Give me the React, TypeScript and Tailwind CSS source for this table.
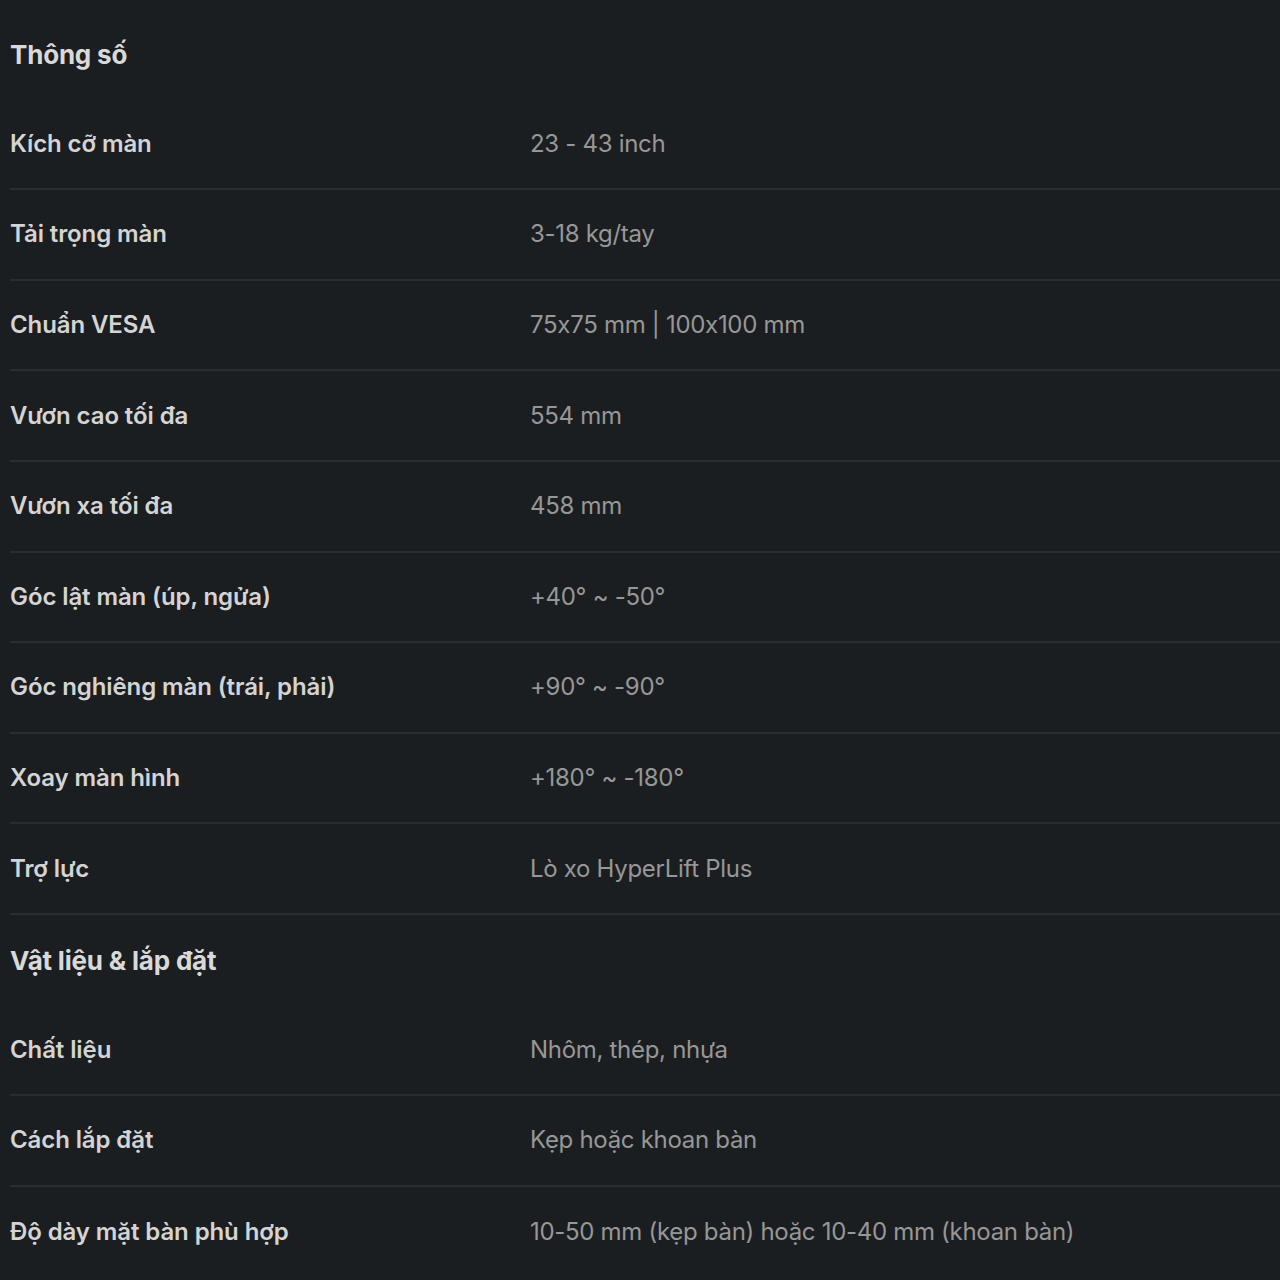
type Row = { label: string; value?: string; heading?: boolean }

const rows: Row[] = [
  { label: "Thông số", heading: true },
  { label: "Kích cỡ màn", value: "23 - 43 inch" },
  { label: "Tải trọng màn", value: "3-18 kg/tay" },
  { label: "Chuẩn VESA", value: "75x75 mm | 100x100 mm" },
  { label: "Vươn cao tối đa", value: "554 mm" },
  { label: "Vươn xa tối đa", value: "458 mm" },
  { label: "Góc lật màn (úp, ngửa)", value: "+40° ~ -50°" },
  { label: "Góc nghiêng màn (trái, phải)", value: "+90° ~ -90°" },
  { label: "Xoay màn hình", value: "+180° ~ -180°" },
  { label: "Trợ lực", value: "Lò xo HyperLift Plus" },
  { label: "Vật liệu & lắp đặt", heading: true },
  { label: "Chất liệu", value: "Nhôm, thép, nhựa" },
  { label: "Cách lắp đặt", value: "Kẹp hoặc khoan bàn" },
  { label: "Độ dày mặt bàn phù hợp", value: "10-50 mm (kẹp bàn) hoặc 10-40 mm (khoan bàn)" },
]

export default function App() {
  return (
    <div
      className="min-h-[1280px] w-[1280px] overflow-hidden bg-[#1b1e20] pl-[10px] pt-[9px] text-[24px]"
      style={{ fontFamily: "Inter, 'Noto Sans', sans-serif" }}
    >
      {rows.map((row) =>
        row.heading ? (
          <div key={row.label} className="flex h-[90.6px] items-center text-[26px] font-bold tracking-[-0.2px] text-[#d9d9d9]">
            {row.label}
          </div>
        ) : (
          <div
            key={row.label}
            className="flex h-[90.6px] items-center border-b-2 border-[#2a2d2f] last:border-b-0"
          >
            <div className="w-[520px] shrink-0 font-semibold tracking-[-0.1px] text-[#d4d4d4]">{row.label}</div>
            <div className="tracking-[-0.3px] text-[#979797]">{row.value}</div>
          </div>
        ),
      )}
    </div>
  )
}
